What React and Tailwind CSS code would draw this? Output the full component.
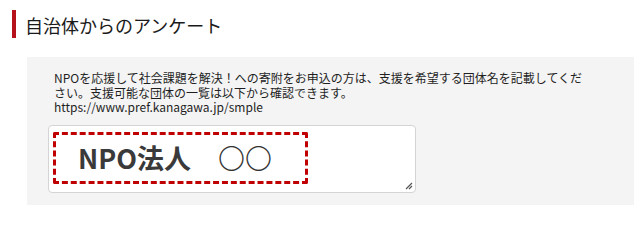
export default function App() {
  const jp = { fontFamily: '"Noto Sans CJK JP", "Noto Sans", sans-serif' };

  return (
    <div className="w-[634px] h-[205px] bg-white overflow-hidden text-[#222]" style={jp}>
      {/* Heading */}
      <div className="flex items-center h-[28px] mt-[10px] ml-[12px]">
        <span className="w-[4px] h-full bg-[#b5121b]" />
        <h2 className="ml-[9px] pt-[2px] text-[18px] leading-none text-[#1a1a1a]">自治体からのアンケート</h2>
      </div>

      {/* Question panel */}
      <div className="mt-[19px] ml-[27px] bg-[#f4f4f4] pl-[21px] pt-[14px] pb-[20px]">
        <p className="pl-[6px] pr-[40px] text-[12px] leading-[14.5px] text-[#1f1f1f]">
          NPOを応援して社会課題を解決！への寄附をお申込の方は、支援を希望する団体名を記載してください。支援可能な団体の一覧は以下から確認できます。
          <br />
          https://www.pref.kanagawa.jp/smple
        </p>

        {/* Textarea mock */}
        <div className="relative mt-[10px] w-[368px] h-[68px] bg-white border border-[#d4d4d4] rounded-[4px] pl-[4px] pt-[6px]">
          <div className="w-[255px] h-[52px] border-[3px] border-dashed border-[#c00000] rounded-[2px] flex items-center pl-[22px]">
            <span className="text-[27px] font-bold leading-none text-[#3a3a3a]">
              NPO法人　<span className="font-light text-[#333]">〇〇</span>
            </span>
          </div>
          <svg className="absolute right-[2px] bottom-[2px]" width="9" height="9" viewBox="0 0 9 9">
            <path d="M8 2 L2 8 M8 5 L5 8" stroke="#555" strokeWidth="1.2" />
          </svg>
        </div>
      </div>
    </div>
  );
}
